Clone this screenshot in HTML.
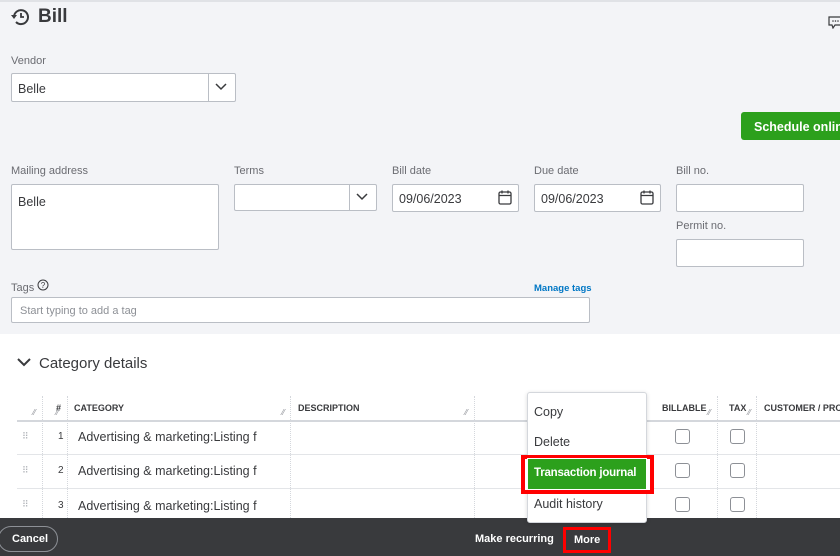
<!DOCTYPE html>
<html><head><meta charset="utf-8"><style>
*{box-sizing:border-box;margin:0;padding:0}
body{width:840px;height:556px;overflow:hidden;position:relative;background:#fff;font-family:"Liberation Sans",sans-serif;color:#393a3d}
.a{position:absolute}
.lbl{position:absolute;font-size:11px;color:#6b6c72}
.box{position:absolute;background:#fff;border:1px solid #babec5;border-radius:2px;font-size:12.5px;color:#393a3d}
.th{position:absolute;font-size:9px;font-weight:bold;color:#393a3d;top:403px;white-space:nowrap}
.vl{position:absolute;border-left:1px dotted #d4d7dc;top:396px;height:122px}
.hl{position:absolute;left:17px;right:0;border-top:1px solid #e3e5e8}
.cb{position:absolute;width:15px;height:15px;border:1px solid #8d9096;border-radius:3px;background:#fff}
.cell{position:absolute;font-size:12.5px;color:#393a3d;white-space:nowrap}
.rs{position:absolute;font-size:8px;color:#8d9096}
</style></head><body>
<div class="a" style="left:0;top:0;width:840px;height:334px;background:#f3f4f7;border-top:2px solid #e0e2e6"></div>
<svg class="a" style="left:10px;top:7px" width="22" height="20" viewBox="0 0 22 20"><path d="M4 10a7 7 0 1 1 2 5" fill="none" stroke="#393a3d" stroke-width="2"/><path d="M1 8l3 4 3-4z" fill="#393a3d"/><path d="M11 6v4h3" fill="none" stroke="#393a3d" stroke-width="1.8"/></svg>
<div class="a" style="left:38px;top:6px;font-size:19px;font-weight:bold;color:#393a3d">Bill</div>
<svg class="a" style="left:828px;top:15px" width="14" height="14"><path d="M1 2h12v8H7l-2 3-1-3H1z" fill="none" stroke="#393a3d" stroke-width="1.2"/><circle cx="5" cy="6" r=".8" fill="#393a3d"/><circle cx="7.5" cy="6" r=".8" fill="#393a3d"/><circle cx="10" cy="6" r=".8" fill="#393a3d"/></svg>
<div class="lbl" style="left:11px;top:55px">Vendor</div>
<div class="box" style="left:11px;top:73px;width:225px;height:29px;padding:8px 6px">Belle</div>
<div class="a" style="left:208px;top:74px;height:27px;border-left:1px solid #babec5"></div>
<svg class="a" style="left:215px;top:83px" width="12" height="8"><path d="M1 1l5 5 5-5" fill="none" stroke="#393a3d" stroke-width="1.5"/></svg>
<div class="a" style="left:741px;top:112px;width:110px;height:28px;background:#2ca01c;border-radius:3px;color:#fff;font-weight:bold;font-size:12.5px;padding:8px 13px;white-space:nowrap">Schedule online</div>
<div class="lbl" style="left:11px;top:165px">Mailing address</div>
<div class="box" style="left:11px;top:184px;width:208px;height:66px;padding:10px 6px">Belle</div>
<div class="lbl" style="left:234px;top:165px">Terms</div>
<div class="box" style="left:234px;top:184px;width:143px;height:27px"></div>
<div class="a" style="left:349px;top:185px;height:25px;border-left:1px solid #babec5"></div>
<svg class="a" style="left:356px;top:193px" width="12" height="8"><path d="M1 1l5 5 5-5" fill="none" stroke="#393a3d" stroke-width="1.5"/></svg>
<div class="lbl" style="left:392px;top:165px">Bill date</div>
<div class="box" style="left:392px;top:184px;width:127px;height:28px;padding:7px 6px">09/06/2023</div>
<div class="lbl" style="left:534px;top:165px">Due date</div>
<div class="box" style="left:534px;top:184px;width:127px;height:28px;padding:7px 6px">09/06/2023</div>
<svg class="a" style="left:498px;top:190px" width="14" height="15"><rect x="1" y="2" width="12" height="12" rx="1.5" fill="none" stroke="#393a3d" stroke-width="1.3"/><path d="M1 5.5h12M4 0.5v3M10 0.5v3" stroke="#393a3d" stroke-width="1.3"/></svg>
<svg class="a" style="left:640px;top:190px" width="14" height="15"><rect x="1" y="2" width="12" height="12" rx="1.5" fill="none" stroke="#393a3d" stroke-width="1.3"/><path d="M1 5.5h12M4 0.5v3M10 0.5v3" stroke="#393a3d" stroke-width="1.3"/></svg>
<div class="lbl" style="left:676px;top:165px">Bill no.</div>
<div class="box" style="left:676px;top:184px;width:128px;height:28px"></div>
<div class="lbl" style="left:676px;top:220px">Permit no.</div>
<div class="box" style="left:676px;top:239px;width:128px;height:28px"></div>
<div class="lbl" style="left:11px;top:282px">Tags</div>
<svg class="a" style="left:37px;top:279px" width="12" height="12"><circle cx="6" cy="6" r="5" fill="none" stroke="#393a3d"/><text x="6" y="9" font-size="8" text-anchor="middle" fill="#393a3d" font-family="Liberation Sans">?</text></svg>
<div class="a" style="left:534px;top:283px;font-size:9.5px;font-weight:bold;color:#0077c5">Manage tags</div>
<div class="box" style="left:11px;top:297px;width:579px;height:26px;padding:7px 8px;font-size:11px;color:#8d9096">Start typing to add a tag</div>
<svg class="a" style="left:17px;top:358px" width="14" height="10"><path d="M1 1l6 6 6-6" fill="none" stroke="#393a3d" stroke-width="2"/></svg>
<div class="a" style="left:39px;top:355px;font-size:15px;color:#393a3d">Category details</div>
<div class="th" style="left:56px">#</div>
<div class="th" style="left:74px">CATEGORY</div>
<div class="th" style="left:298px">DESCRIPTION</div>
<div class="th" style="left:662px">BILLABLE</div>
<div class="th" style="left:729px">TAX</div>
<div class="th" style="left:764px">CUSTOMER / PROJECT</div>
<div class="rs" style="left:33px;top:408px">⁄⁄</div><div class="rs" style="left:56px;top:408px">⁄⁄</div><div class="rs" style="left:282px;top:408px">⁄⁄</div><div class="rs" style="left:465px;top:408px">⁄⁄</div><div class="rs" style="left:708px;top:408px">⁄⁄</div><div class="rs" style="left:748px;top:408px">⁄⁄</div>
<div class="vl" style="left:42px"></div><div class="vl" style="left:67px"></div><div class="vl" style="left:290px"></div><div class="vl" style="left:474px"></div><div class="vl" style="left:717px"></div><div class="vl" style="left:756px"></div>
<div class="hl" style="top:420px;border-top:2px solid #d4d7dc"></div>
<div class="hl" style="top:454px"></div>
<div class="hl" style="top:488px"></div>
<div class="a" style="left:22px;top:431px;font-size:9px;color:#b0b3b8">⠿</div>
<div class="a" style="left:22px;top:465px;font-size:9px;color:#b0b3b8">⠿</div>
<div class="a" style="left:22px;top:499px;font-size:9px;color:#b0b3b8">⠿</div>
<div class="cell" style="left:58px;top:431px;font-size:10px">1</div><div class="cell" style="left:78px;top:430px">Advertising &amp; marketing:Listing f</div>
<div class="cell" style="left:58px;top:465px;font-size:10px">2</div><div class="cell" style="left:78px;top:464px">Advertising &amp; marketing:Listing f</div>
<div class="cell" style="left:58px;top:500px;font-size:10px">3</div><div class="cell" style="left:78px;top:499px">Advertising &amp; marketing:Listing f</div>
<div class="cb" style="left:675px;top:429px"></div><div class="cb" style="left:730px;top:429px"></div>
<div class="cb" style="left:675px;top:463px"></div><div class="cb" style="left:730px;top:463px"></div>
<div class="cb" style="left:675px;top:497px"></div><div class="cb" style="left:730px;top:497px"></div>
<div class="a" style="left:0;top:518px;width:840px;height:38px;background:#393a3d"></div>
<div class="a" style="left:-2px;top:526px;width:60px;height:26px;border:1px solid #8d9096;border-radius:14px;color:#fff;font-weight:bold;font-size:11px;padding:6px 0 0 13px">Cancel</div>
<div class="a" style="left:475px;top:533px;color:#fff;font-weight:bold;font-size:11px">Make recurring</div>
<div class="a" style="left:563px;top:527px;width:48px;height:26px;border:3px solid #f00;color:#fff;font-weight:bold;font-size:11px;padding:4px 0 0 8px">More</div>
<div class="a" style="left:527px;top:392px;width:120px;height:131px;background:#fff;border:1px solid #d4d7dc;border-radius:3px;box-shadow:0 1px 4px rgba(0,0,0,.15)"></div>
<div class="a" style="left:534px;top:405px;font-size:12.5px;color:#393a3d">Copy</div>
<div class="a" style="left:534px;top:435px;font-size:12.5px;color:#393a3d">Delete</div>
<div class="a" style="left:521px;top:455px;width:133px;height:39px;border:4px solid #f00;background:#fff"></div>
<div class="a" style="left:527px;top:458px;width:120px;height:32px;background:#2ca01c;border:1px solid #fff;color:#fff;font-weight:bold;font-size:11.5px;letter-spacing:-0.2px;padding:8px 0 0 6px;white-space:nowrap;overflow:hidden">Transaction journal</div>
<div class="a" style="left:534px;top:497px;font-size:12.5px;color:#393a3d">Audit history</div>
</body></html>
